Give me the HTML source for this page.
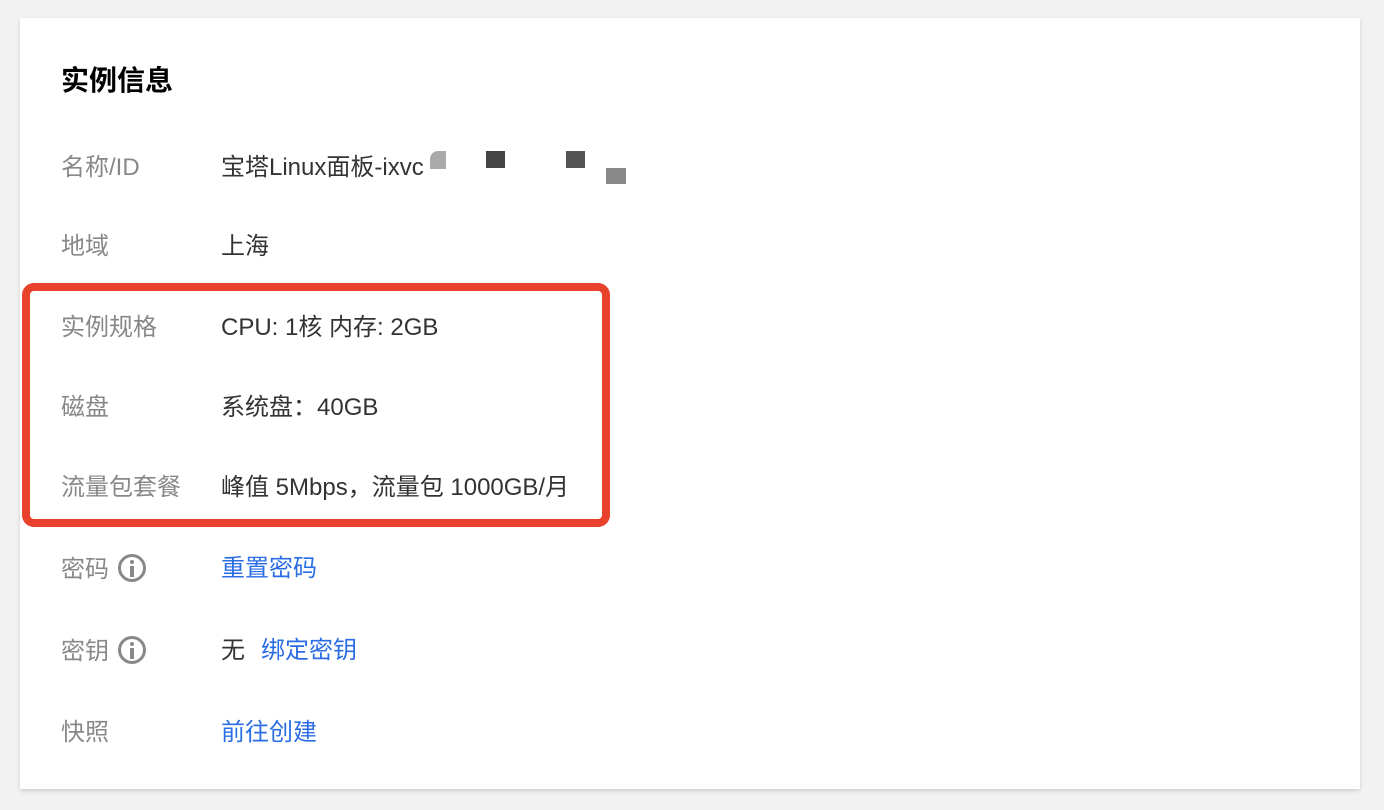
<!DOCTYPE html>
<html><head><meta charset="utf-8"><style>
*{margin:0;padding:0;box-sizing:border-box}
body{width:1384px;height:810px;background:#f2f2f2;position:relative;font-family:"Liberation Sans","Noto Sans CJK SC",sans-serif;overflow:hidden}
.card{position:absolute;left:20px;top:18px;width:1340px;height:771px;background:#fff;box-shadow:0 2px 4px rgba(0,0,0,.15)}
.t{position:absolute;left:61px;top:63px;font-size:28px;font-weight:bold;color:#000;line-height:36px}
.row{position:absolute;left:61px;font-size:24px;line-height:30px;white-space:nowrap}
.l{position:absolute;left:0;color:#888}
.v{position:absolute;left:160px;color:#333}
a{color:#2b6de5;text-decoration:none}
.box{position:absolute;left:22px;top:283px;width:588px;height:244px;border:8px solid #e8412c;border-radius:12px}
.i{display:inline-block;width:28px;height:28px;border:3px solid #888;border-radius:50%;vertical-align:-5px;margin-left:9px;position:relative}
.i:before{content:"";position:absolute;left:9px;top:3px;width:4px;height:4px;background:#888;border-radius:50%}
.i:after{content:"";position:absolute;left:9px;top:9px;width:4px;height:11px;background:#888}
.sq{position:absolute}
</style></head><body>
<div class="card"></div>
<div class="t">实例信息</div>
<div class="row" style="top:153px"><span class="l">名称/ID</span><span class="v">宝塔Linux面板-ixvc</span></div>
<div class="sq" style="left:430px;top:151px;width:16px;height:18px;background:#aaa;border-radius:8px 0 0 0"></div>
<div class="sq" style="left:486px;top:151px;width:19px;height:17px;background:#444"></div>
<div class="sq" style="left:566px;top:151px;width:19px;height:17px;background:#555"></div>
<div class="sq" style="left:606px;top:168px;width:20px;height:16px;background:#888"></div>
<div class="row" style="top:232px"><span class="l">地域</span><span class="v">上海</span></div>
<div class="row" style="top:313px"><span class="l">实例规格</span><span class="v">CPU: 1核 内存: 2GB</span></div>
<div class="row" style="top:393px"><span class="l">磁盘</span><span class="v">系统盘：40GB</span></div>
<div class="row" style="top:473px"><span class="l">流量包套餐</span><span class="v">峰值 5Mbps，流量包 1000GB/月</span></div>
<div class="box"></div>
<div class="row" style="top:554px"><span class="l">密码<span class="i"></span></span><span class="v"><a>重置密码</a></span></div>
<div class="row" style="top:636px"><span class="l">密钥<span class="i"></span></span><span class="v">无<a style="margin-left:16px">绑定密钥</a></span></div>
<div class="row" style="top:718px"><span class="l">快照</span><span class="v"><a>前往创建</a></span></div>
</body></html>
